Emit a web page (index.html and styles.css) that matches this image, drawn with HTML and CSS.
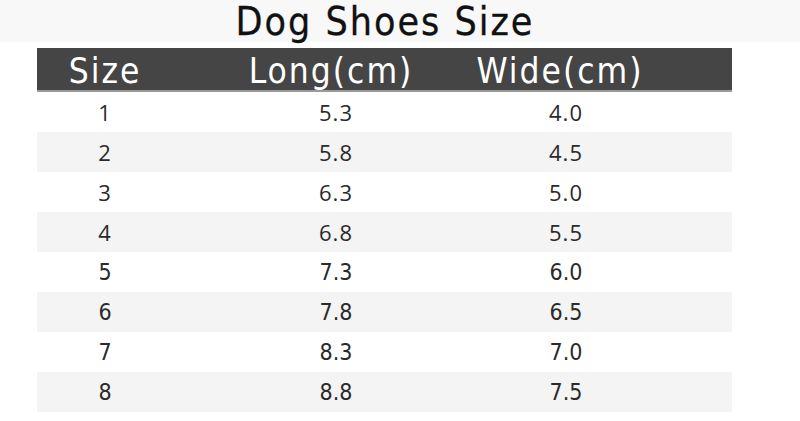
FILE: index.html
```html
<!DOCTYPE html>
<html>
<head>
<meta charset="utf-8">
<link rel="stylesheet" href="styles.css">
</head>
<body>
<div class="title">Dog Shoes Size</div>
<div class="table">
  <div class="row head">
    <div class="cell">Size</div>
    <div class="cell">Long(cm)</div>
    <div class="cell">Wide(cm)</div>
  </div>
  <div class="row"><div class="cell">1</div><div class="cell">5.3</div><div class="cell">4.0</div></div>
  <div class="row alt"><div class="cell">2</div><div class="cell">5.8</div><div class="cell">4.5</div></div>
  <div class="row"><div class="cell">3</div><div class="cell">6.3</div><div class="cell">5.0</div></div>
  <div class="row alt"><div class="cell">4</div><div class="cell">6.8</div><div class="cell">5.5</div></div>
  <div class="row narrow"><div class="cell">5</div><div class="cell">7.3</div><div class="cell">6.0</div></div>
  <div class="row alt narrow"><div class="cell">6</div><div class="cell">7.8</div><div class="cell">6.5</div></div>
  <div class="row narrow"><div class="cell">7</div><div class="cell">8.3</div><div class="cell">7.0</div></div>
  <div class="row alt narrow"><div class="cell">8</div><div class="cell">8.8</div><div class="cell">7.5</div></div>
</div>
</body>
</html>
```
FILE: styles.css
```css
html, body {
  margin: 0;
  padding: 0;
  background: #ffffff;
}
body {
  width: 800px;
  height: 421px;
  overflow: hidden;
  font-family: "Open Sans", "DejaVu Sans", sans-serif;
  color: #222;
}
.title {
  height: 42px;
  background: #f8f8f8;
  display: flex;
  justify-content: center;
  align-items: center;
  padding-right: 30px;
  font-family: "DejaVu Sans Condensed", "DejaVu Sans", sans-serif;
  font-size: 39px;
  letter-spacing: 2px;
  color: #111;
  line-height: 1;
  -webkit-text-stroke: 0.3px #111;
}
.table {
  margin: 6px 0 0 37px;
  width: 695px;
}
.row {
  display: grid;
  grid-template-columns: 136px 326px 134px 1fr;
  height: 40px;
  align-items: center;
}
.row .cell {
  display: flex;
  justify-content: center;
  font-size: 22px;
  letter-spacing: 1px;
  color: #2a2a2a;
  white-space: nowrap;
}
.row.alt {
  background: #f4f4f4;
}
.row.narrow .cell {
  font-family: "DejaVu Sans Condensed", "DejaVu Sans", sans-serif;
  font-size: 23px;
  letter-spacing: 0;
}
.row.head {
  height: 42px;
  background: #454545;
  border-bottom: 2px solid #9a9a9a;
}
.row.head .cell {
  color: #ffffff;
  font-family: "DejaVu Sans Condensed", "DejaVu Sans", sans-serif;
  font-size: 35px;
  letter-spacing: 2px;
  line-height: 1;
  padding-top: 4px;
}
.row.head .cell:nth-child(2) {
  padding-right: 10px;
}
.row.head .cell:nth-child(3) {
  padding-right: 12px;
}
```
